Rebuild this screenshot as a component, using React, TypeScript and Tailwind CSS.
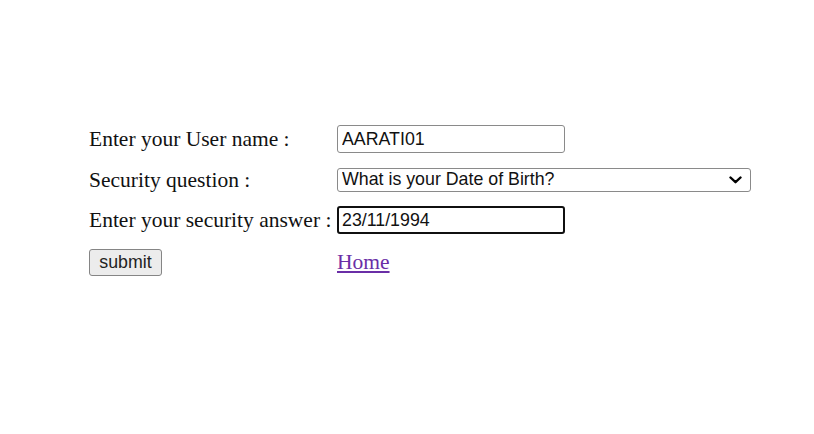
import { useState } from "react"

const serif = { fontFamily: '"Liberation Serif", "Times New Roman", serif' }
const sans = { fontFamily: '"Liberation Sans", Arial, sans-serif' }

export default function App() {
  const [user, setUser] = useState("AARATI01")
  const [answer, setAnswer] = useState("23/11/1994")

  return (
    <div className="min-h-screen w-full bg-white pl-[89px] pt-[125px] text-[#111]" style={serif}>
      <div className="flex flex-col">
        {/* user name */}
        <div className="flex h-[28px] items-center">
          <label className="w-[248px] pt-[1px] text-[21.5px] leading-none">Enter your User name :</label>
          <input
            value={user}
            onChange={(e) => setUser(e.target.value)}
            className="h-[28px] w-[228px] rounded-[3px] border border-[#8a8a8a] px-[4px] text-[17.8px] text-[#111] outline-none"
            style={sans}
          />
        </div>

        {/* security question */}
        <div className="mt-[15px] flex h-[24px] items-center">
          <label className="w-[248px] pt-[1px] text-[21.5px] leading-none">Security question :</label>
          <div className="relative h-[24px] w-[414px]">
            <select
              className="h-full w-full appearance-none rounded-[3px] border border-[#8a8a8a] bg-white pl-[4px] text-[17.8px] leading-none text-[#111] outline-none"
              style={sans}
              defaultValue="dob"
            >
              <option value="dob">What is your Date of Birth?</option>
              <option value="pet">What is your pet's name?</option>
            </select>
            <svg
              className="pointer-events-none absolute right-[9px] top-[8px]"
              width="13"
              height="8"
              viewBox="0 0 13 8"
              fill="none"
            >
              <path d="M1.5 1.5 L6.5 6.2 L11.5 1.5" stroke="black" strokeWidth="2.4" strokeLinecap="round" strokeLinejoin="round" />
            </svg>
          </div>
        </div>

        {/* answer */}
        <div className="mt-[14px] flex h-[28px] items-center">
          <label className="w-[248px] whitespace-nowrap pt-[1px] text-[21.5px] leading-none">Enter your security answer :</label>
          <input
            value={answer}
            onChange={(e) => setAnswer(e.target.value)}
            className="h-[28px] w-[228px] rounded-[3px] border-2 border-[#101010] px-[3px] text-[17.8px] text-[#111] outline-none"
            style={sans}
          />
        </div>

        {/* actions */}
        <div className="mt-[15px] flex h-[27px] items-center">
          <div className="w-[248px]">
            <button
              className="h-[27px] w-[73px] rounded-[3px] border border-[#858585] bg-[#ececec] text-[17.8px] leading-none text-[#222]"
              style={sans}
            >
              submit
            </button>
          </div>
          <a href="#" className="text-[21.5px] leading-none text-[#6a2ea6] underline" style={serif}>
            Home
          </a>
        </div>
      </div>
    </div>
  )
}
